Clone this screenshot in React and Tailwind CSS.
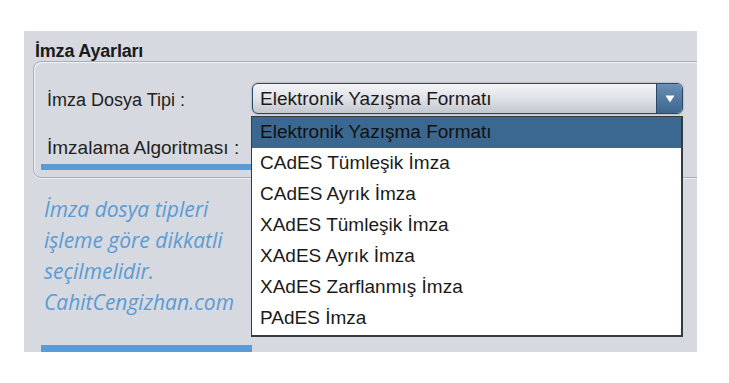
import React from "react";

const options = [
  "Elektronik Yazışma Formatı",
  "CAdES Tümleşik İmza",
  "CAdES Ayrık İmza",
  "XAdES Tümleşik İmza",
  "XAdES Ayrık İmza",
  "XAdES Zarflanmış İmza",
  "PAdES İmza",
];

export default function App() {
  return (
    <div className="w-[729px] h-[383px] bg-white pt-[31px] pl-[24px]">
      <div
        className="relative w-[673px] h-[321px] bg-[#d6d9df] overflow-hidden flex flex-col"
        style={{ fontFamily: '"Liberation Sans", Arial, sans-serif' }}
      >
        {/* Title */}
        <div className="pt-[11px] pl-[11px] h-[30px] text-[18px] leading-[18px] font-bold text-[#1a1a1a] tracking-[-0.2px]">
          İmza Ayarları
        </div>

        {/* Group box */}
        <div className="ml-[9px] w-[700px] h-[117px] rounded-[8px] border border-[#a9aeb6] shadow-[inset_1px_1px_1px_rgba(255,255,255,0.7),0_1px_1px_rgba(255,255,255,0.6)] flex flex-col pl-[13px]">
          <div className="flex items-center mt-[21px] h-[31px]">
            <span className="w-[205px] pt-[3px] text-[18px] text-[#222]">İmza Dosya Tipi :</span>
            <div className="w-[431px] h-[31px] rounded-[6px] border border-[#2b4866] bg-gradient-to-b from-[#f3f4f6] via-[#dfe2e6] to-[#c3c7ce] flex items-center shadow-[0_0_2px_rgba(40,70,110,0.5)] overflow-hidden">
              <span className="flex-1 pl-[7px] pt-[2px] text-[19px] text-[#1a1a1a]">Elektronik Yazışma Formatı</span>
              <div className="w-[26px] h-full bg-gradient-to-b from-[#6b8fb5] to-[#3d6690] border-l border-[#2b4866] flex items-center justify-center">
                <svg width="10" height="8" viewBox="0 0 10 8">
                  <path d="M0.5 0.5 L9.5 0.5 L5 7.5 Z" fill="#ffffff" />
                </svg>
              </div>
            </div>
          </div>
          <div className="mt-[24px] h-[20px] flex items-center text-[19px] text-[#222]">İmzalama Algoritması :</div>
          <div className="mt-[6px] -ml-[6px] w-[211px] h-[6px] bg-[#5b9bd5]" />
        </div>

        {/* Note */}
        <div
          className="mt-[16px] pl-[20px] text-[21px] leading-[31px] italic text-[#5b9bd5]"
          style={{ fontFamily: '"Open Sans", sans-serif' }}
        >
          <div>İmza dosya tipleri</div>
          <div>işleme göre dikkatli</div>
          <div>seçilmelidir.</div>
          <div>CahitCengizhan.com</div>
        </div>

        <div className="mt-auto ml-[17px] w-[211px] h-[7px] bg-[#5b9bd5]" />

        {/* Dropdown popup */}
        <div className="absolute left-[227px] top-[85px] w-[432px] h-[221px] bg-white border border-[#3a3a3a] border-r-2 border-b-2">
          {options.map((o, i) => (
            <div
              key={o}
              className={`h-[31px] flex items-center pl-[8px] text-[19px] ${
                i === 0 ? "bg-[#3b6890] text-[#111]" : "text-[#1a1a1a]"
              }`}
            >
              {o}
            </div>
          ))}
        </div>
      </div>
    </div>
  );
}
